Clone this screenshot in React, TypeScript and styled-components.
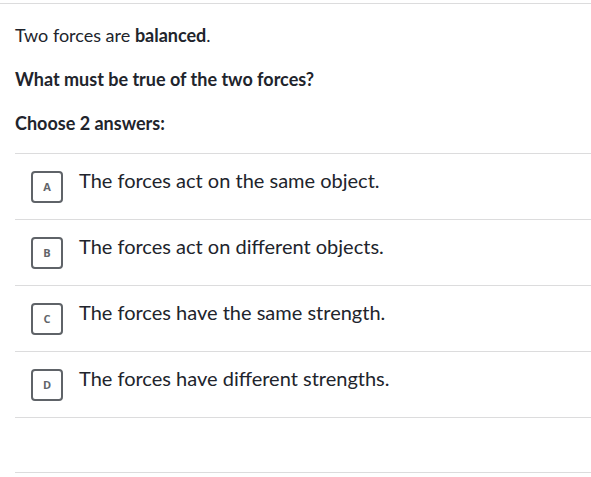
import React from "react";
import styled, { createGlobalStyle } from "styled-components";

const GlobalStyle = createGlobalStyle`
	html, body {
		margin: 0;
		padding: 0;
		background: #ffffff;
	}
	body {
		font-family: Lato, "Noto Sans", sans-serif;
		color: #21242c;
	}
`;

const choices = [
	{ letter: "A", text: "The forces act on the same object." },
	{ letter: "B", text: "The forces act on different objects." },
	{ letter: "C", text: "The forces have the same strength." },
	{ letter: "D", text: "The forces have different strengths." },
];

export default function App() {
	return (
		<>
			<GlobalStyle />
			<Page>
				<Question>
					<Paragraph>
						Two forces are <strong>balanced</strong>.
					</Paragraph>
					<Paragraph bold>What must be true of the two forces?</Paragraph>
					<Paragraph bold>Choose 2 answers:</Paragraph>
				</Question>
				<ChoiceList>
					{choices.map((c) => (
						<Choice key={c.letter}>
							<LetterBox>{c.letter}</LetterBox>
							<ChoiceText>{c.text}</ChoiceText>
						</Choice>
					))}
				</ChoiceList>
				<Footer />
			</Page>
		</>
	);
}

const Page = styled.div`
	margin-top: 3px;
	border-top: 1px solid #dcdcdd;
	width: 100%;
	overflow: hidden;
`;

const Question = styled.div`
	padding: 20px 0 0 15px;
`;

const Paragraph: any = styled.p`
	margin: 0 0 22px;
	font-size: 18px;
	line-height: 22px;
	font-weight: ${(props: any) => (props.bold ? 700 : 400)};

	&:last-child {
		margin-bottom: 19px;
	}

	strong {
		font-weight: 700;
	}
`;

const ChoiceList = styled.div`
	margin-left: 15px;
	border-top: 1px solid #dcdcdd;
`;

const Choice = styled.div`
	display: flex;
	flex-direction: row;
	align-items: center;
	height: 65px;
	padding-left: 16px;
	border-bottom: 1px solid #dcdcdd;
`;

const LetterBox = styled.span`
	box-sizing: border-box;
	display: inline-flex;
	align-items: center;
	justify-content: center;
	width: 32px;
	height: 32px;
	flex: 0 0 32px;
	border: 2px solid #5f6368;
	border-radius: 4px;
	font-size: 11px;
	font-weight: 700;
	color: #626569;
	font-family: "Open Sans", Lato, sans-serif;
`;

const ChoiceText = styled.div`
	margin-left: 16px;
	margin-top: -14px;
	font-size: 20px;
	line-height: 24px;
	color: #21242c;
`;

const Footer = styled.div`
	margin-left: 15px;
	height: 54px;
	border-bottom: 1px solid #dcdcdd;
`;
